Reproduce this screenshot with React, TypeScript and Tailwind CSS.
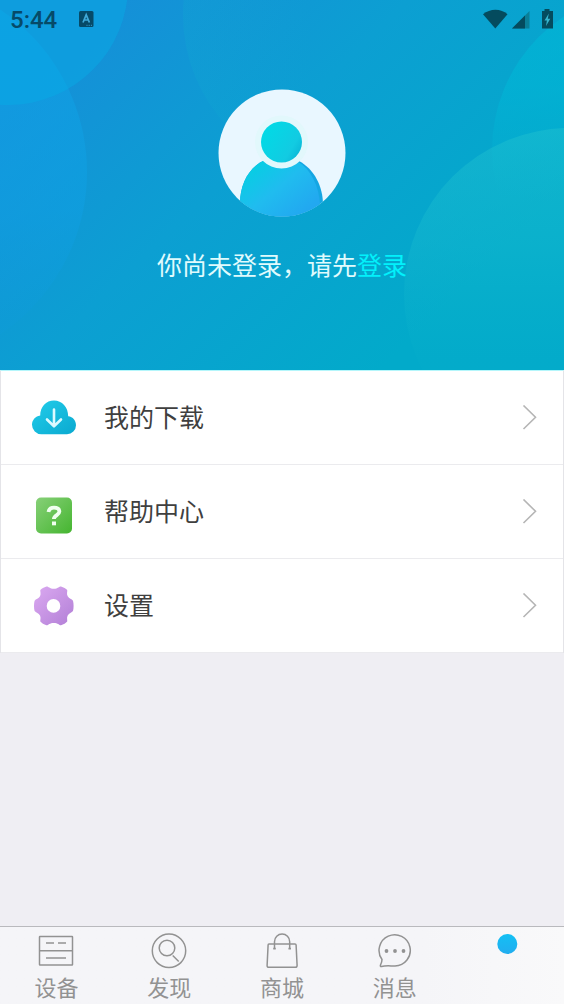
import type { ReactNode } from 'react';

const HeaderBackground = () => (
  <svg
    className="absolute inset-0 w-full h-full"
    viewBox="0 0 564 370"
    preserveAspectRatio="xMidYMid slice"
    aria-hidden="true"
  >
    <defs>
      <linearGradient id="sky" gradientUnits="userSpaceOnUse" x1="90" y1="30" x2="400" y2="350">
        <stop offset="0" stopColor="#1590d8" />
        <stop offset="0.45" stopColor="#0c9fd2" />
        <stop offset="1" stopColor="#02aaca" />
      </linearGradient>
      <linearGradient id="middleBubble" x1="0" y1="0" x2="1" y2="0">
        <stop offset="0" stopColor="#0fb0d0" stopOpacity="0.2" />
        <stop offset="0.4" stopColor="#0fb0d0" stopOpacity="0" />
      </linearGradient>
      <linearGradient id="leftBubble" x1="0" y1="0" x2="0" y2="1">
        <stop offset="0" stopColor="#0fa6ea" stopOpacity="0.5" />
        <stop offset="0.6" stopColor="#0fa0e4" stopOpacity="0.5" />
        <stop offset="1" stopColor="#0f9ada" stopOpacity="0.1" />
      </linearGradient>
      <linearGradient id="rightBubble" x1="0" y1="0" x2="0" y2="1">
        <stop offset="0" stopColor="#00b9d8" stopOpacity="0.6" />
        <stop offset="0.3" stopColor="#00b9d8" stopOpacity="0.5" />
        <stop offset="0.65" stopColor="#00b9d8" stopOpacity="0" />
      </linearGradient>
      <linearGradient id="lowerBubble" x1="0" y1="0" x2="0" y2="1">
        <stop offset="0" stopColor="#1fc0d0" stopOpacity="0.5" />
        <stop offset="0.35" stopColor="#1abdd0" stopOpacity="0.35" />
        <stop offset="0.7" stopColor="#0fb6cc" stopOpacity="0.08" />
      </linearGradient>
    </defs>
    <rect width="564" height="370" fill="url(#sky)" />
    <circle cx="345" cy="15" r="162" fill="url(#middleBubble)" />
    <circle cx="-108" cy="172" r="195" fill="url(#leftBubble)" />
    <circle cx="8" cy="-15" r="120" fill="#06ade6" fillOpacity="0.45" />
    <circle cx="652" cy="150" r="160" fill="url(#rightBubble)" />
    <circle cx="570" cy="294" r="166" fill="url(#lowerBubble)" />
  </svg>
);

const StatusBar = () => (
  <div className="flex items-center justify-between h-10 px-[10px] text-[#064a68]">
    <div className="flex items-center gap-5">
      <span className="font-[Roboto,sans-serif] font-medium text-2xl">5:44</span>
      <svg width="18" height="18" viewBox="0 0 18 18" aria-hidden="true">
        <rect x="2" width="14.500" height="16" rx="1.500" fill="#064a68" />
        <path d="M6 11.500 9.200 3.800l3.200 7.700M7.200 9h4" fill="none" stroke="#3fa9d8" strokeWidth="1.700" />
        <path d="M9.500 14.300h1M11.700 14.300h1M13.900 14.300h1" stroke="#3fa9d8" strokeWidth="1" />
      </svg>
    </div>
    <svg width="71" height="22" viewBox="0 0 71 22" aria-hidden="true">
      <path d="M0 5.200C7-0.800 18-0.800 24.500 5.200L12.300 19.500Z" fill="#044b5e" />
      <path d="M29 19.500 46.500 2v17.500Z" fill="#0a7f98" />
      <path d="M29 19.500 42 6.500v13Z" fill="#044b5e" />
      <path d="M61.500 0h5v2H70v17.500H59V2h2.500Z" fill="#044b5e" />
      <path d="M65.800 4.500 61.500 11.500h2.400L63 17l4.300-7.300h-2.500Z" fill="#35b4cd" />
    </svg>
  </div>
);

const Avatar = () => (
  <svg className="w-32 h-32" viewBox="0 0 128 128" aria-hidden="true">
    <defs>
      <linearGradient id="head" x1="0" y1="0.2" x2="1" y2="0.8">
        <stop offset="0" stopColor="#00dbe6" />
        <stop offset="0.75" stopColor="#12cbe2" />
        <stop offset="1" stopColor="#09b5d6" />
      </linearGradient>
      <linearGradient id="body" x1="0.1" y1="0.1" x2="0.9" y2="0.8">
        <stop offset="0" stopColor="#05cfe2" />
        <stop offset="0.5" stopColor="#20bcef" />
        <stop offset="1" stopColor="#22a8f0" />
      </linearGradient>
      <clipPath id="avatarClip">
        <circle cx="64" cy="64" r="63.500" />
      </clipPath>
    </defs>
    <circle cx="64" cy="64" r="63.500" fill="#e9f7ff" />
    <g clipPath="url(#avatarClip)">
      <path d="M22 114C22 95 31 79 45 72H81C96 80 105 97 105 116V128H22Z" fill="#15a6e3" />
      <path d="M22 114C22 95 31 79 45 72H79C93 80 101 97 102 116V128H22Z" fill="url(#body)" />
    </g>
    <circle cx="63.500" cy="53" r="26.500" fill="#e2f8fc" />
    <circle cx="63.500" cy="53" r="20.500" fill="url(#head)" />
  </svg>
);

const CloudIcon = () => (
  <svg className="w-11 h-11" viewBox="0 0 44 44" aria-hidden="true">
    <defs>
      <linearGradient id="cloud" x1="0" y1="0" x2="1" y2="1">
        <stop offset="0" stopColor="#22cdea" />
        <stop offset="1" stopColor="#0aa9d0" />
      </linearGradient>
    </defs>
    <path
      d="M9.500 38.200A9.500 9.500 0 0 1 0 28.700C0 24.200 3.500 20.200 8.200 19.600C8.200 10.800 14 4.500 22 4.500S36.200 11 36.200 20.200C41 20.600 44 24.600 44 29.200A9 9 0 0 1 35 38.200Z"
      fill="url(#cloud)"
    />
    <path
      d="M22 13.500V30M15 23.500 22 30.300l7-6.800"
      fill="none"
      stroke="#dcfaff"
      strokeWidth="2.600"
      strokeLinecap="round"
      strokeLinejoin="round"
    />
  </svg>
);

const HelpIcon = () => (
  <svg className="w-11 h-11" viewBox="0 0 44 44" aria-hidden="true">
    <defs>
      <linearGradient id="help" x1="0" y1="0" x2="1" y2="1">
        <stop offset="0" stopColor="#87d078" />
        <stop offset="1" stopColor="#45b530" />
      </linearGradient>
    </defs>
    <rect x="4" y="7.500" width="36" height="36" rx="5" fill="url(#help)" />
    <path
      d="M16.500 22C17 18.800 19 17.600 22 17.600c3.200 0 5.400 1.500 5.400 4 0 3.600-5.500 3.400-5.500 7.500"
      fill="none"
      stroke="#f0fff0"
      strokeWidth="3.800"
    />
    <rect x="20" y="31.500" width="4" height="3.800" fill="#f0fff0" />
  </svg>
);

const GearIcon = () => (
  <svg className="w-11 h-11" viewBox="0 0 44 44" aria-hidden="true">
    <defs>
      <linearGradient id="gear" x1="0" y1="0" x2="1" y2="1">
        <stop offset="0" stopColor="#dba9f1" />
        <stop offset="1" stopColor="#b27fd6" />
      </linearGradient>
    </defs>
    <path
      d="M14.500 2.600C16 2.200 17.500 4.800 21.800 4.800S27.500 2.200 29 2.600C31.500 3.400 34 4.700 35.200 6C35.600 7.400 34.300 10 35.700 12.300S39.800 14.900 41 16.700C41.800 19.400 41.800 24.400 41 27.100C39.800 28.900 37 29 35.700 31.500S35.600 36 35.200 37.500C34 39 31.500 40.500 29 41.200C27.500 41.500 26 39 21.800 39S16 41.500 14.500 41.200C12 40.500 9.500 39 8.300 37.500C8 36 9.200 34 8 31.500S3.800 28.900 2.600 27.100C1.800 24.400 1.800 19.400 2.600 16.700C3.800 14.900 6.700 14.800 8 12.300S8 7.400 8.300 6C9.500 4.700 12 3.400 14.500 2.600Z"
      fill="url(#gear)"
    />
    <circle cx="21.500" cy="21.900" r="6.800" fill="#fff" />
  </svg>
);

const DeviceIcon = () => (
  <>
    <rect x="1.500" y="3.500" width="33" height="28.500" rx="0.500" />
    <path d="M1.500 17.800h33M8 10h8M20 10h8M8 25h20" />
  </>
);

const DiscoverIcon = () => (
  <>
    <circle cx="18" cy="17.800" r="16.700" />
    <circle cx="16" cy="15" r="7.800" />
    <path d="m21.700 22.500 6 6" />
  </>
);

const ShopIcon = () => (
  <>
    <path d="M5 11h26q1 0 1.100 1l1 20.500q0 1.800-1.800 1.800H4.900q-1.900 0-1.800-1.800l1-20.500q0-1 .900-1Z" />
    <path d="M10.500 16V8.700a7.600 7.600 0 0 1 15.200 0v7.300" />
    <path d="M10.500 14.700v1.800M25.700 14.700v1.800" strokeWidth="2.500" />
  </>
);

const MessageIcon = () => (
  <>
    <path d="M5 26.500A15.600 15.600 0 1 1 18 33C13 33 9 32.300 4.500 33.500Q3 33.700 3.500 32C4.700 29.500 5 28.500 5 26.500Z" />
    <g fill="#929292" stroke="none">
      <circle cx="9.500" cy="18" r="1.900" />
      <circle cx="18" cy="18" r="1.900" />
      <circle cx="26.500" cy="18" r="1.900" />
    </g>
  </>
);

const MineIcon = () => (
  <g stroke="none">
    <defs>
      <linearGradient id="mine" x1="0" y1="0" x2="0" y2="1">
        <stop offset="0" stopColor="#14c0f4" />
        <stop offset="1" stopColor="#22adef" />
      </linearGradient>
    </defs>
    <circle cx="17.300" cy="11" r="10" fill="url(#mine)" />
  </g>
);

const menuItems: { label: string; icon: ReactNode }[] = [
  { label: '我的下载', icon: <CloudIcon /> },
  { label: '帮助中心', icon: <HelpIcon /> },
  { label: '设置', icon: <GearIcon /> },
];

const tabs: { id: string; label: string; icon: ReactNode }[] = [
  { id: 'device', label: '设备', icon: <DeviceIcon /> },
  { id: 'discover', label: '发现', icon: <DiscoverIcon /> },
  { id: 'shop', label: '商城', icon: <ShopIcon /> },
  { id: 'message', label: '消息', icon: <MessageIcon /> },
  { id: 'mine', label: '', icon: <MineIcon /> },
];

const App = () => {
  return (
    <div className="min-h-screen flex flex-col bg-[#efeef3] font-['Noto_Sans_CJK_SC',sans-serif]">
      {/* Profile header */}
      <header className="relative overflow-hidden bg-[#0c9fd2]">
        <HeaderBackground />
        <div className="relative">
          <StatusBar />
          <div className="flex flex-col items-center pt-[49px] pb-[88px] gap-[29px]">
            <Avatar />
            <p className="text-[25px] leading-9 text-[#e0fbfd]">
              你尚未登录，请先
              <a href="#login" className="text-[#02f1fb]">登录</a>
            </p>
          </div>
        </div>
      </header>

      {/* Menu */}
      <main className="flex-1">
        <ul className="bg-white border-x border-t border-x-[#e4e4e8] border-t-[#b4f6fb]">
          {menuItems.map((item) => (
            <li key={item.label} className="border-b border-[#ebebee]">
              <button className="w-full h-[93px] flex items-center pl-[31px] pr-[26px] text-left">
                {item.icon}
                <span className="flex-1 pl-7 pb-1 text-[25px] leading-9 text-[#3f3f3f]">{item.label}</span>
                <svg width="15" height="26" viewBox="0 0 15 26" fill="none" stroke="#b5b5b5" strokeWidth="1.600" aria-hidden="true">
                  <path d="M1.500 0.500 13.500 12.300 1.500 24" />
                </svg>
              </button>
            </li>
          ))}
        </ul>
      </main>

      {/* Tab bar */}
      <nav className="flex border-t border-[#b9b9bd] bg-linear-to-r from-[#f5f5f8] from-75% to-[#f9f9fa]">
        {tabs.map((tab) => (
          <button
            key={tab.id}
            aria-label={tab.label || '我的'}
            className="flex-1 flex flex-col items-center h-[77px] pt-[6px] text-[22px] leading-[34px] text-[#929292]"
          >
            <svg className="w-9 h-9" viewBox="0 0 36 36" fill="none" stroke="#929292" strokeWidth="1.500" aria-hidden="true">
              {tab.icon}
            </svg>
            <span>{tab.label}</span>
          </button>
        ))}
      </nav>
    </div>
  );
};

export default App;
